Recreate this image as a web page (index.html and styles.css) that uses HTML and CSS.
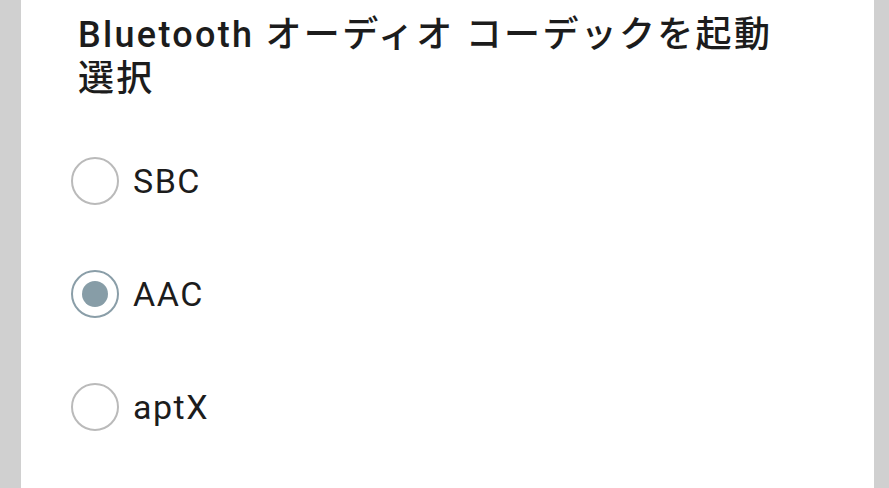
FILE: index.html
```html
<!DOCTYPE html>
<html lang="ja">
<head>
    <meta charset="UTF-8">
    <title>Bluetooth オーディオ コーデック</title>
    <link rel="stylesheet" href="styles.css">
</head>
<body>
    <div class="dialog">
        <h1 class="dialog-title">Bluetooth オーディオ コーデックを起動選択</h1>
        <ul class="choice-list">
            <li class="choice">
                <span class="radio"></span>
                <span class="choice-label">SBC</span>
            </li>
            <li class="choice">
                <span class="radio checked"></span>
                <span class="choice-label">AAC</span>
            </li>
            <li class="choice">
                <span class="radio"></span>
                <span class="choice-label">aptX</span>
            </li>
        </ul>
    </div>
</body>
</html>
```

FILE: styles.css
```css
* {
    box-sizing: border-box;
}
html, body {
    height: 100%;
}
body {
    margin: 0;
    background-color: #d0d0d0;
    font-family: Roboto, "Noto Sans CJK JP", sans-serif;
    overflow: hidden;
}
.dialog {
    height: 100%;
    margin: 0 15px 0 21px;
    padding: 13px 85px 0 57px;
    background-color: #fff;
}
.dialog-title {
    margin: 0;
    font-size: 36px;
    font-weight: 500;
    line-height: 44px;
    letter-spacing: 2.3px;
    color: #1c1c1c;
}
.choice-list {
    list-style: none;
    margin: 23px 0 0 0;
    padding: 0;
}
.choice {
    display: flex;
    align-items: center;
    gap: 14px;
    height: 113px;
    margin-left: -7px;
}
.radio {
    flex: none;
    width: 48px;
    height: 48px;
    border: 2px solid #bababa;
    border-radius: 50%;
    display: flex;
    align-items: center;
    justify-content: center;
}
.radio.checked {
    border-color: #8a9ea8;
    border-width: 2.5px;
}
.radio.checked::after {
    content: "";
    width: 26px;
    height: 26px;
    border-radius: 50%;
    background-color: #879da7;
}
.choice-label {
    font-size: 34px;
    letter-spacing: 1.5px;
    color: #1c1c1c;
}
```
